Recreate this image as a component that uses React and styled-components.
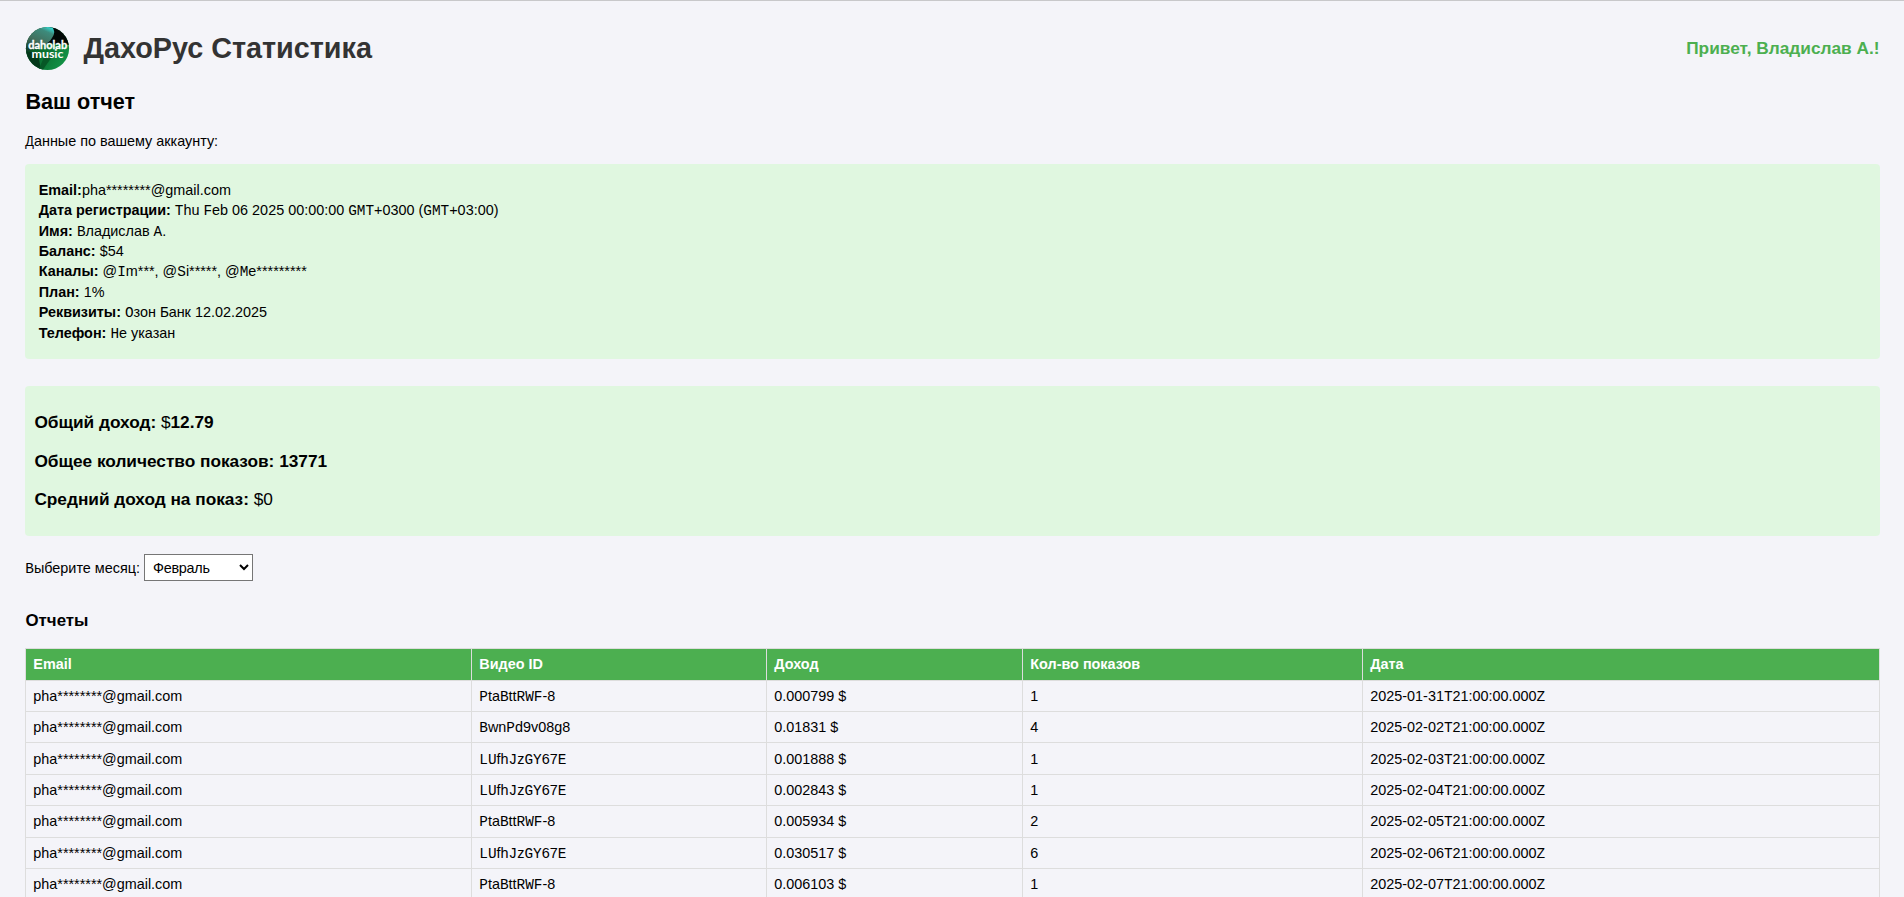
import React from 'react';
import styled, { createGlobalStyle } from 'styled-components';

const GlobalStyle = createGlobalStyle`
  * { box-sizing: border-box; }
  html, body { margin: 0; background: #f4f4f9; }
  body {
    height: 897px;
    overflow: hidden;
    font: 14.4px/18px "Liberation Sans", Arial, sans-serif;
    color: #000;
  }
`;

const Page = styled.main`
  height: 897px;
  overflow: hidden;
  border-top: 1px solid #c8c8ca;
  padding: 25px 24.5px 0 25px;
`;

const Header = styled.header`
  display: flex;
  align-items: center;
  justify-content: space-between;
  height: 44px;
`;

const Brand = styled.div`
  display: flex;
  align-items: center;
  gap: 13.5px;
`;

const Logo = styled.svg`
  width: 45px;
  height: 45px;
  display: block;
`;

const Title = styled.h1`
  margin: 0;
  padding-bottom: 1px;
  font-size: 28.8px;
  line-height: 34px;
  letter-spacing: -0.03px;
  color: #333;
`;

const Greeting = styled.div`
  padding-bottom: 1px;
  font-size: 17.28px;
  line-height: 20px;
  font-weight: bold;
  color: #4caf50;
`;

const Subtitle = styled.h2`
  margin: 19px 0 0;
  padding-left: 0.4px;
  font-size: 21.6px;
  line-height: 25px;
`;

const Intro = styled.p`
  margin: 18px 0 14px;
  padding-left: 0.3px;
  line-height: 18px;
`;

const Panel = styled.section`
  background: #e0f7e0;
  border-radius: 4px;
`;

const Account = styled(Panel)`
  height: 195px;
  padding: 15.6px 13.7px;
  line-height: 20.45px;
`;

const Summary = styled(Panel)`
  height: 150px;
  margin-top: 27px;
  padding: 26px 9.4px;
  font-size: 17.28px;
`;

const Total = styled.p`
  margin: 0 0 18.5px;
  line-height: 20px;
  letter-spacing: -0.02px;
`;

const MonthRow = styled.div`
  display: flex;
  align-items: center;
  gap: 4px;
  margin-top: 18px;
  height: 27px;
  padding-left: 0.3px;
`;

const MonthSelect = styled.select`
  width: 109px;
  height: 27px;
  padding: 0 4px;
  border: 1px solid #767676;
  border-radius: 0;
  background: #fff;
  color: #000;
  font: 14.4px "Liberation Sans", Arial, sans-serif;
  letter-spacing: -0.25px;
`;

const ReportsTitle = styled.h3`
  margin: 30px 0 17px;
  padding-left: 0.5px;
  font-size: 16.85px;
  line-height: 20px;
`;

const Table = styled.table`
  width: 1854px;
  table-layout: fixed;
  border-collapse: collapse;
`;

const Col = styled.col`
  width: ${(p) => p.$width}px;
`;

const Row = styled.tr`
  height: ${(p) => p.$height}px;
`;

const HeadCell = styled.th`
  padding: 0 7px 1px 7.3px;
  border: 1px solid #ddd;
  background: #4caf50;
  color: #fff;
  text-align: left;
`;

const Cell = styled.td`
  padding: 0 7px ${(p) => p.$bottom || 0}px 7.3px;
  border: 1px solid #ddd;
`;

const Capital = styled.span`
  font-family: "Liberation Mono", monospace;
  line-height: 1;
`;

// Regular-weight text sets its capital letters in the fixed-width face.
function Mixed({ children }) {
  return children
    .split(/([A-ZА-Я]+)/)
    .map((part, i) => (i % 2 ? <Capital key={i}>{part}</Capital> : part));
}

const account = [
  ['Дата регистрации:', 'Thu Feb 06 2025 00:00:00 GMT+0300 (GMT+03:00)'],
  ['Имя:', 'Владислав А.'],
  ['Баланс:', '$54'],
  ['Каналы:', '@Im***, @Si*****, @Me*********'],
  ['План:', '1%'],
  ['Реквизиты:', 'Озон Банк 12.02.2025'],
  ['Телефон:', 'Не указан'],
];

const columns = [
  ['Email', 446],
  ['Видео ID', 295],
  ['Доход', 256],
  ['Кол-во показов', 340],
  ['Дата', 517],
];

const email = 'pha********@gmail.com';

const reports = [
  ['PtaBttRWF-8', '0.000799', 1, '2025-01-31', 31],
  ['BwnPd9v08g8', '0.01831', 4, '2025-02-02', 31],
  ['LUfhJzGY67E', '0.001888', 1, '2025-02-03', 32],
  ['LUfhJzGY67E', '0.002843', 1, '2025-02-04', 31],
  ['PtaBttRWF-8', '0.005934', 2, '2025-02-05', 32, 1],
  ['LUfhJzGY67E', '0.030517', 6, '2025-02-06', 31],
  ['PtaBttRWF-8', '0.006103', 1, '2025-02-07', 31],
];

function BrandLogo() {
  return (
    <Logo viewBox="0 0 45 45">
      <defs>
        <linearGradient id="base" x1="0" y1="0.2" x2="1" y2="0.8">
          <stop offset="0" stopColor="#063817" />
          <stop offset="0.4" stopColor="#0a6a2e" />
          <stop offset="1" stopColor="#14984a" />
        </linearGradient>
        <linearGradient id="sheen" x1="0.8" y1="0" x2="0.3" y2="1">
          <stop offset="0" stopColor="#35e0dc" />
          <stop offset="0.2" stopColor="#3d8b7c" />
          <stop offset="0.6" stopColor="#426f5d" />
          <stop offset="1" stopColor="#123f2a" />
        </linearGradient>
        <clipPath id="disc"><circle cx="22.5" cy="22.5" r="21.6" /></clipPath>
      </defs>
      <g clipPath="url(#disc)">
        <rect width="45" height="45" fill="url(#base)" />
        <path d="M25 0H45V19L20 17Z" fill="#020706" />
        <path d="M0 0H26Q32 5 27 12Q24 18 12 22L0 26Z" fill="url(#sheen)" />
        <path d="M0 25L13 27L16 45H0Z" fill="#04381a" />
        <path d="M19 31L29 28L17 45H13Z" fill="#075826" />
      </g>
      <g fill="#fff" fontFamily="Lato, sans-serif" textAnchor="middle">
        <text x="22.7" y="22.8" fontSize="10.5" fontWeight="700" stroke="#fff" strokeWidth="0.3" textLength="39" lengthAdjust="spacingAndGlyphs">daholab</text>
        <text x="22.5" y="32" fontSize="11" fontWeight="700" textLength="32" lengthAdjust="spacingAndGlyphs">music</text>
      </g>
    </Logo>
  );
}

export default function App() {
  return (
    <>
      <GlobalStyle />
      <Page>
        <Header>
          <Brand>
            <BrandLogo />
            <Title>ДахоРус Статистика</Title>
          </Brand>
          <Greeting>Привет, Владислав А.!</Greeting>
        </Header>
        <Subtitle>Ваш отчет</Subtitle>
        <Intro><Mixed>Данные по вашему аккаунту:</Mixed></Intro>
        <Account>
          <div><b>Email:</b>{email}</div>
          {account.map(([label, value]) => (
            <div key={label}><b>{label}</b> <Mixed>{value}</Mixed></div>
          ))}
        </Account>
        <Summary>
          <Total><b>Общий доход:</b> $<b>12.79</b></Total>
          <Total><b>Общее количество показов:</b> <b>13771</b></Total>
          <Total><b>Средний доход на показ:</b> $0</Total>
        </Summary>
        <MonthRow>
          <label htmlFor="month"><Mixed>Выберите месяц:</Mixed></label>
          <MonthSelect id="month" defaultValue="2">
            <option value="2">Февраль</option>
          </MonthSelect>
        </MonthRow>
        <ReportsTitle>Отчеты</ReportsTitle>
        <Table>
          <colgroup>
            {columns.map(([name, width]) => <Col key={name} $width={width} />)}
          </colgroup>
          <thead>
            <Row $height={32}>
              {columns.map(([name]) => <HeadCell key={name}>{name}</HeadCell>)}
            </Row>
          </thead>
          <tbody>
            {reports.map(([id, income, views, date, height, bottom]) => (
              <Row key={date} $height={height}>
                <Cell $bottom={bottom}>{email}</Cell>
                <Cell $bottom={bottom}><Mixed>{id}</Mixed></Cell>
                <Cell $bottom={bottom}>{income} $</Cell>
                <Cell $bottom={bottom}>{views}</Cell>
                <Cell $bottom={bottom}><Mixed>{`${date}T21:00:00.000Z`}</Mixed></Cell>
              </Row>
            ))}
          </tbody>
        </Table>
      </Page>
    </>
  );
}
